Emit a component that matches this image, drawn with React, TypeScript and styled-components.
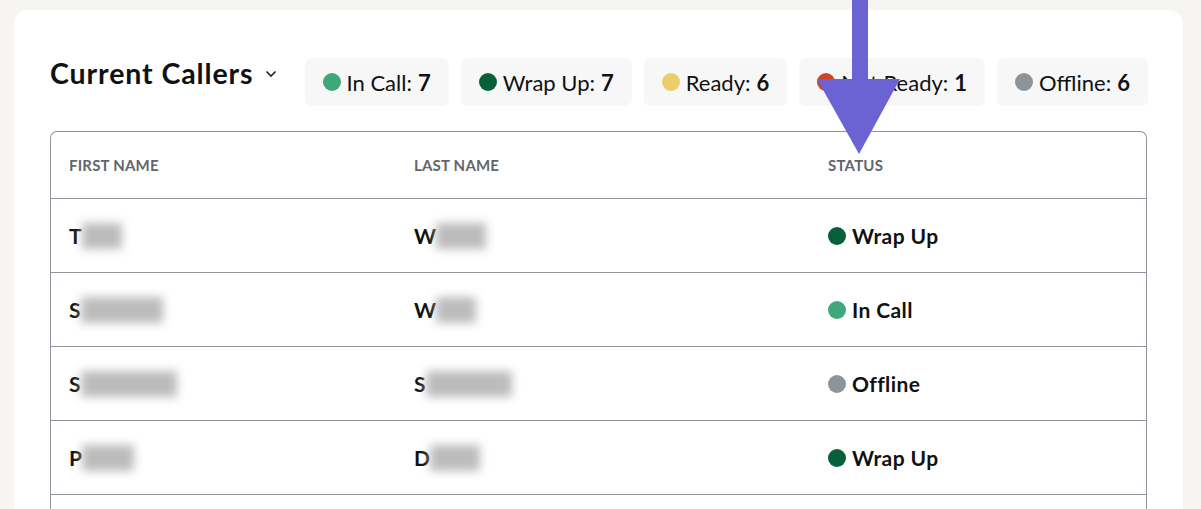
import React from 'react'
import styled, { createGlobalStyle } from 'styled-components'

const GlobalStyle = createGlobalStyle`
  html, body {
    margin: 0;
    padding: 0;
    background: #f6f5f1;
    font-family: Lato, "Noto Sans", "Liberation Sans", sans-serif;
    color: #111;
    overflow: hidden;
  }
`

const STATUS_COLORS: Record<string, string> = {
  'In Call': '#3fa87a',
  'Wrap Up': '#08603a',
  Ready: '#edcd6a',
  'Not Ready': '#cc4327',
  Offline: '#8e9398',
}

const Page = styled.div`
  position: relative;
  height: 509px;
  padding: 10px 18px 0 14px;
  box-sizing: border-box;
`

const Card = styled.div`
  background: #fff;
  border-radius: 14px;
  padding: 48px 36px 0 36px;
  height: 520px;
  box-sizing: border-box;
`

const HeaderRow = styled.div`
  display: flex;
  align-items: flex-start;
`

const TitleGroup = styled.div`
  display: flex;
  align-items: center;
  flex-shrink: 0;
  gap: 11px;
  margin-top: -2px;
  margin-right: 28px;
`

const Title = styled.h2`
  margin: 0;
  font-size: 28.5px;
  line-height: 34px;
  font-weight: 700;
  letter-spacing: 0.9px;
  white-space: nowrap;
  color: #111;
`

const Chevron = styled.svg`
  width: 12px;
  height: 8px;
  margin-top: 2px;
`

const Chips = styled.div`
  display: flex;
  gap: 12px;
`

const Chip = styled.div`
  display: flex;
  align-items: center;
  gap: 6px;
  height: 48px;
  padding: 0 18px;
  background: #f7f7f7;
  border-radius: 7px;
  font-size: 22px;
  color: #111;
  white-space: nowrap;
`

const Count = styled.b`
  font-weight: 700;
  margin-left: 6px;
`

const Dot = styled.span<{ $color: string }>`
  display: inline-block;
  width: 18px;
  height: 18px;
  border-radius: 50%;
  background: ${(p) => p.$color};
  flex-shrink: 0;
`

const Table = styled.div`
  margin-top: 25px;
  border: 1px solid #8f959b;
  border-bottom: none;
  border-radius: 7px 7px 0 0;
`

const Row = styled.div<{ $head?: boolean }>`
  display: grid;
  grid-template-columns: 345px 414px 1fr;
  height: ${(p) => (p.$head ? 66 : 73)}px;
  border-bottom: 1px solid #8f959b;
  align-items: center;
`

const HeadCell = styled.div`
  padding-left: 18px;
  font-size: 15px;
  font-weight: 700;
  letter-spacing: 0.2px;
  text-transform: uppercase;
  color: #62666b;
`

const Cell = styled.div`
  display: flex;
  align-items: center;
  gap: 6px;
  padding-left: 18px;
  font-size: 21px;
  font-weight: 700;
  letter-spacing: 0.4px;
  color: #111;
`

const NameCell = styled(Cell)`
  gap: 0;
`

const Blur = styled.span<{ $w: number }>`
  display: inline-block;
  width: ${(p) => p.$w}px;
  height: 26px;
  background: #bcbcbc;
  filter: blur(5px);
`

const Arrow = styled.svg`
  position: absolute;
  left: 812px;
  top: 0;
  width: 94px;
  height: 160px;
`

type Caller = { first: string; fw: number; last: string; lw: number; status: string }

const callers: Caller[] = [
  { first: 'T', fw: 40, last: 'W', lw: 50, status: 'Wrap Up' },
  { first: 'S', fw: 82, last: 'W', lw: 40, status: 'In Call' },
  { first: 'S', fw: 96, last: 'S', lw: 86, status: 'Offline' },
  { first: 'P', fw: 52, last: 'D', lw: 50, status: 'Wrap Up' },
  { first: '', fw: 0, last: '', lw: 0, status: '' },
]

const counts = [
  { label: 'In Call', n: 7 },
  { label: 'Wrap Up', n: 7 },
  { label: 'Ready', n: 6 },
  { label: 'Not Ready', n: 1 },
  { label: 'Offline', n: 6 },
]

const App: React.FC = () => (
  <>
    <GlobalStyle />
    <Page>
      <Card>
        <HeaderRow>
          <TitleGroup>
            <Title>Current Callers</Title>
            <Chevron viewBox="0 0 12 8">
              <path d="M1.5 1.5 L6 6 L10.5 1.5" fill="none" stroke="#222" strokeWidth="1.6" />
            </Chevron>
          </TitleGroup>
          <Chips>
            {counts.map((c) => (
              <Chip key={c.label}>
                <Dot $color={STATUS_COLORS[c.label]} />
                <span>
                  {c.label}:<Count>{c.n}</Count>
                </span>
              </Chip>
            ))}
          </Chips>
        </HeaderRow>
        <Table>
          <Row $head>
            <HeadCell>First Name</HeadCell>
            <HeadCell>Last Name</HeadCell>
            <HeadCell>Status</HeadCell>
          </Row>
          {callers.map((c, i) => (
            <Row key={i}>
              <NameCell>
                {c.first}
                {c.fw > 0 && <Blur $w={c.fw} />}
              </NameCell>
              <NameCell>
                {c.last}
                {c.lw > 0 && <Blur $w={c.lw} />}
              </NameCell>
              <Cell>
                {c.status && <Dot $color={STATUS_COLORS[c.status]} />}
                {c.status}
              </Cell>
            </Row>
          ))}
        </Table>
      </Card>
      <Arrow viewBox="0 0 94 160">
        <rect x="40" y="0" width="16" height="82" fill="#6b63d3" />
        <polygon points="5,79 88,79 47,154" fill="#6b63d3" />
      </Arrow>
    </Page>
  </>
)

export default App
